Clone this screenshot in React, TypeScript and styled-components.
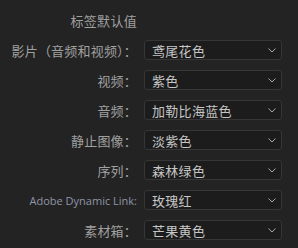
import React from "react";
import styled, { createGlobalStyle } from "styled-components";

const GlobalStyle = createGlobalStyle`
  html, body {
    margin: 0;
    padding: 0;
    background: #232323;
  }
  body {
    font-family: "Noto Sans CJK SC", "Noto Sans", sans-serif;
  }
`;

const rows = [
  { label: "影片（音频和视频）：", value: "鸢尾花色" },
  { label: "视频：", value: "紫色" },
  { label: "音频：", value: "加勒比海蓝色" },
  { label: "静止图像：", value: "淡紫色" },
  { label: "序列：", value: "森林绿色" },
  { label: "Adobe Dynamic Link:", value: "玫瑰红", latin: true },
  { label: "素材箱：", value: "芒果黄色" },
];

function App() {
  return (
    <>
      <GlobalStyle />
      <Panel>
        <Title>标签默认值</Title>
        <span />
        {rows.map((row) => (
          <React.Fragment key={row.label}>
            <Label $latin={row.latin}>{row.label}</Label>
            <Select>
              <span>{row.value}</span>
              <Chevron width="8" height="5" viewBox="0 0 8 5">
                <path d="M0.5 0.5 L4 4 L7.5 0.5" fill="none" stroke="#a9a9a9" strokeWidth="1" />
              </Chevron>
            </Select>
          </React.Fragment>
        ))}
      </Panel>
    </>
  );
}

const Panel = styled.div`
  display: grid;
  grid-template-columns: 137px 138px;
  grid-auto-rows: 20px;
  column-gap: 7px;
  row-gap: 10px;
  padding-top: 10px;
`;

const Title = styled.div`
  display: flex;
  align-items: center;
  justify-content: flex-end;
  font-size: 13px;
  color: #a0a0a0;
  letter-spacing: 0.3px;
`;

const Label = styled.div<{ $latin?: boolean }>`
  display: flex;
  align-items: center;
  justify-content: flex-end;
  white-space: nowrap;
  font-size: ${(p) => (p.$latin ? "11px" : "13px")};
  font-family: ${(p) => (p.$latin ? `"Open Sans", "Liberation Sans", sans-serif` : "inherit")};
  color: ${(p) => (p.$latin ? "#8f95a8" : "#a0a0a0")};
  letter-spacing: ${(p) => (p.$latin ? "0" : "0.2px")};
`;

const Select = styled.div`
  display: flex;
  align-items: center;
  justify-content: space-between;
  box-sizing: border-box;
  height: 20px;
  padding: 0 5px 0 7px;
  background: #1c1c1c;
  border: 1px solid #363636;
  border-radius: 3px;
  font-size: 13px;
  color: #c6c6c6;
  letter-spacing: 0.3px;
`;

const Chevron = styled.svg`
  display: block;
`;

export default App;
